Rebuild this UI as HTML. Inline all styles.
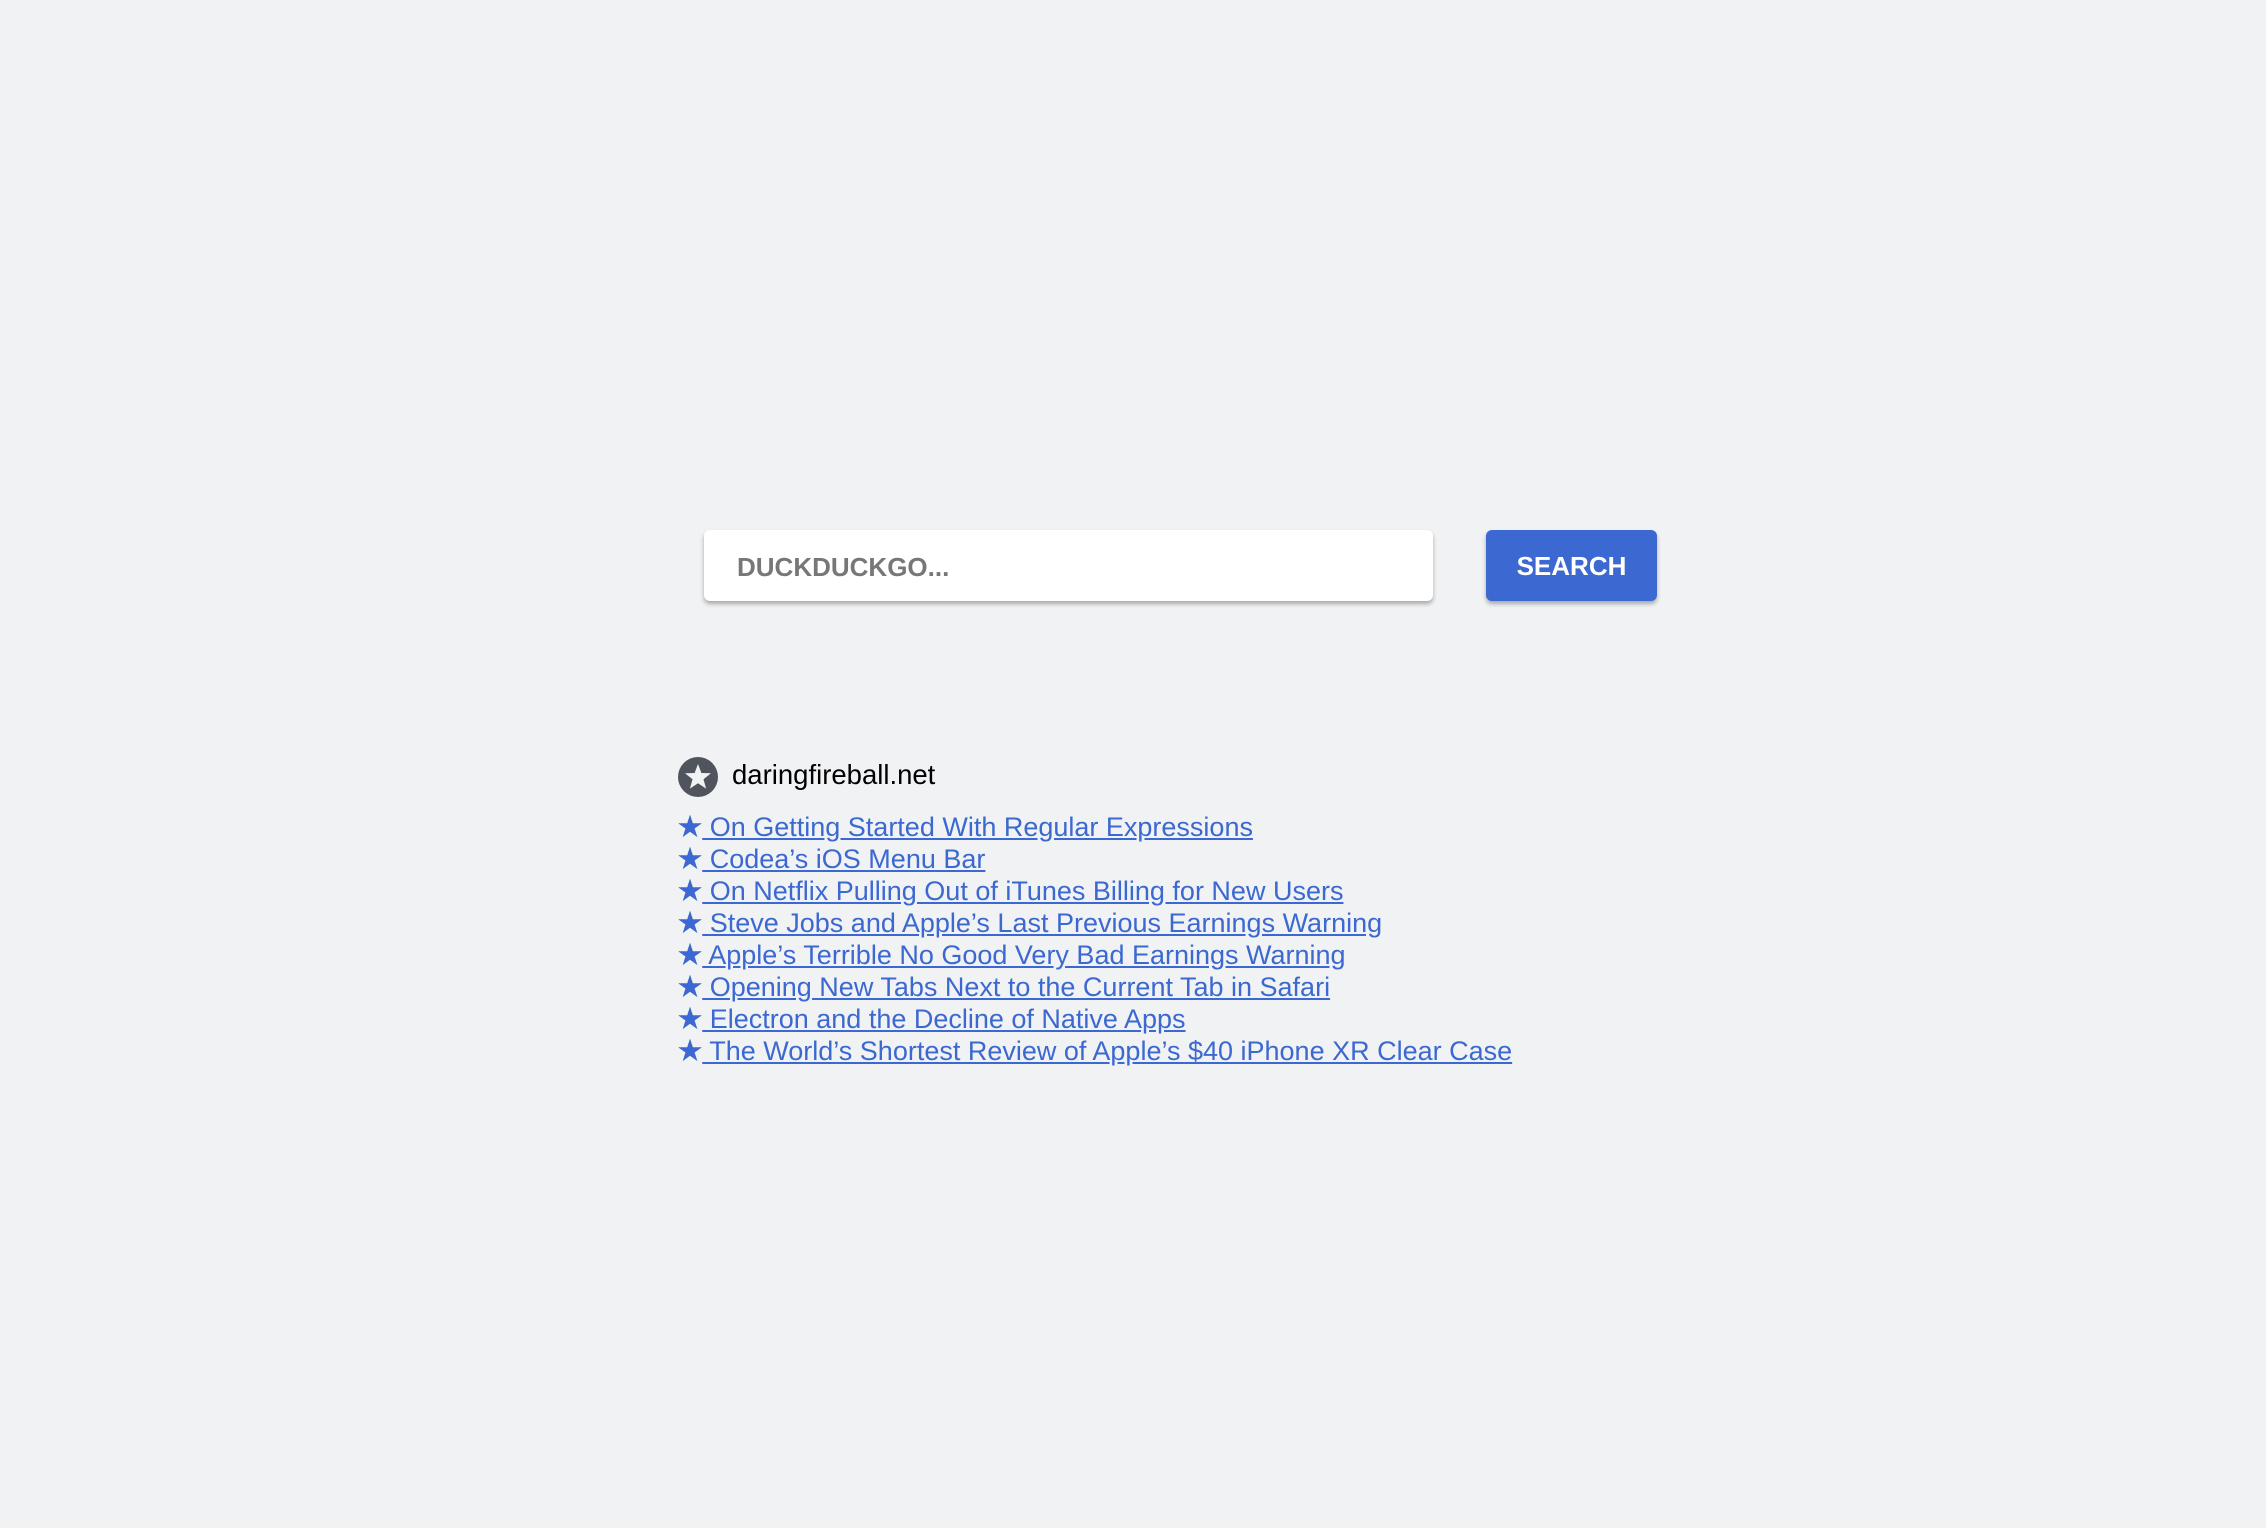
<!DOCTYPE html>
<html><head><meta charset="utf-8"><style>
body{margin:0;background:#f1f2f4;width:2266px;height:1528px;overflow:hidden;font-family:"Liberation Sans",sans-serif;position:relative}
.inp{position:absolute;left:704px;top:530px;width:729px;height:71px;background:#fff;border-radius:6px;box-shadow:0 3px 4px rgba(0,0,0,.3)}
.inp span{position:absolute;left:33px;top:22px;font-size:26px;font-weight:bold;color:#777}
.btn{position:absolute;left:1486px;top:530px;width:171px;height:71px;background:#3b68d1;border-radius:6px;box-shadow:0 3px 4px rgba(0,0,0,.3);color:#fff;font-weight:bold;font-size:26px;text-align:center;line-height:73px}
.ic{position:absolute;left:678px;top:757px;width:40px;height:40px;border-radius:50%;background:#50545c}
.dom{position:absolute;left:732px;top:759px;font-size:27.5px;color:#000}
.links{position:absolute;left:678px;top:811px;font-size:27px;line-height:32px}
.links a{color:#3b68d1;text-decoration:underline;display:block;white-space:nowrap}
.links b{font-weight:normal;display:inline-block;transform:scale(1.15);transform-origin:50% 60%}
</style></head><body>
<div class="inp"><span>DUCKDUCKGO...</span></div>
<div class="btn">SEARCH</div>
<div class="ic"><svg width="40" height="40" viewBox="0 0 40 40"><polygon fill="#f1f2f4" points="20,7 23.4,16 33,16.3 25.5,22.3 28.1,31.6 20,26.2 11.9,31.6 14.5,22.3 7,16.3 16.6,16"/></svg></div>
<div class="dom">daringfireball.net</div>
<div class="links">
<a><b>★</b> On Getting Started With Regular Expressions</a>
<a><b>★</b> Codea’s iOS Menu Bar</a>
<a><b>★</b> On Netflix Pulling Out of iTunes Billing for New Users</a>
<a><b>★</b> Steve Jobs and Apple’s Last Previous Earnings Warning</a>
<a><b>★</b> Apple’s Terrible No Good Very Bad Earnings Warning</a>
<a><b>★</b> Opening New Tabs Next to the Current Tab in Safari</a>
<a><b>★</b> Electron and the Decline of Native Apps</a>
<a><b>★</b> The World’s Shortest Review of Apple’s $40 iPhone XR Clear Case</a>
</div>
</body></html>
